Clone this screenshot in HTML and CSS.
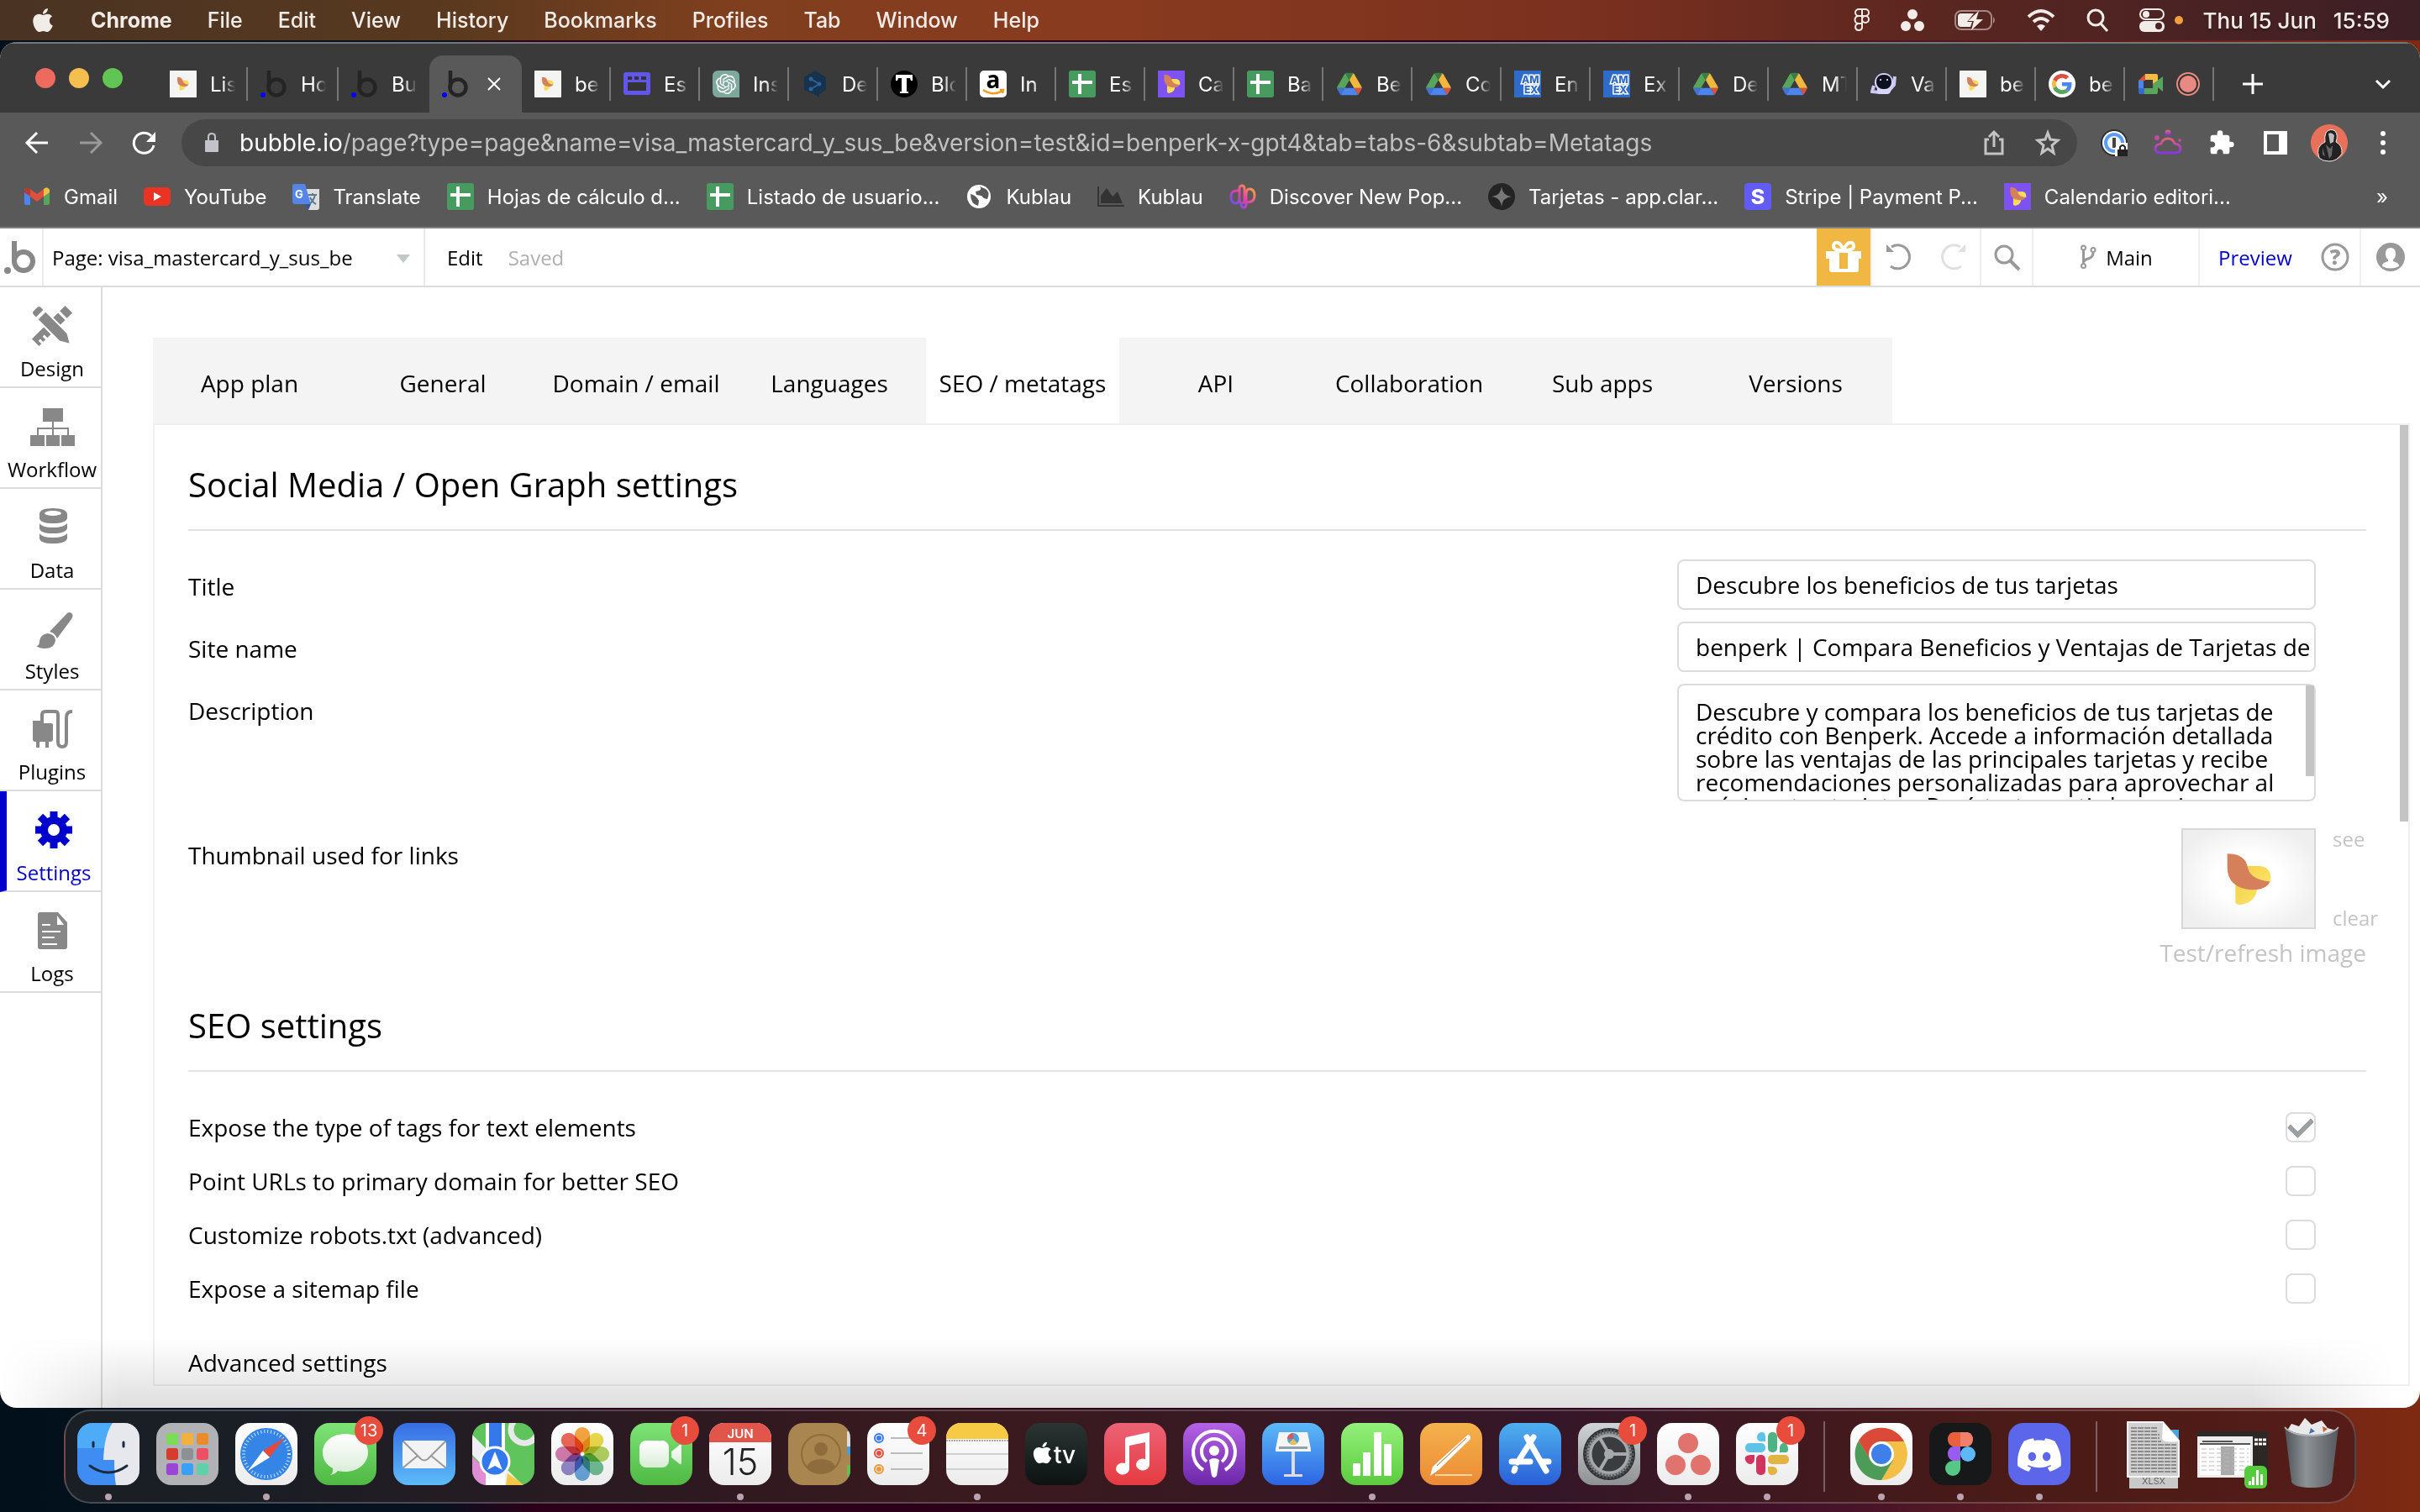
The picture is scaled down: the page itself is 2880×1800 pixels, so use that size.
FILE: index.html
```
<!DOCTYPE html>
<html lang="es">
<head>
    <meta charset="UTF-8">
    <meta name="viewport" content="width=device-width, initial-scale=1.0">
    <title>visa_mastercard_y_sus_be | Bubble Editor</title>
    <link rel="stylesheet" href="styles.css">
</head>
<body>
    <!-- Shared icons -->
    <svg class="sprite" aria-hidden="true">
        <defs>
            <linearGradient id="g-yellow" x1="0" y1="0" x2="1" y2="1"><stop offset="0" stop-color="#f3d34a"/><stop offset="1" stop-color="#fbe36a"/></linearGradient>
            <linearGradient id="g-paw" x1="0" y1="0" x2="0" y2="1"><stop offset="0" stop-color="#e0617a"/><stop offset="1" stop-color="#8a35e0"/></linearGradient>
            <linearGradient id="g-pop" x1="0" y1="1" x2="1" y2="0"><stop offset="0" stop-color="#3b5bff"/><stop offset=".5" stop-color="#e83ea8"/><stop offset="1" stop-color="#ffb52e"/></linearGradient>
            <linearGradient id="g-white" x1="0" y1="0" x2="0" y2="1"><stop offset="0" stop-color="#fff"/><stop offset="1" stop-color="#d8ecd6"/></linearGradient>
            <linearGradient id="g-steel" x1="0" y1="0" x2="1" y2="0"><stop offset="0" stop-color="#4e5357"/><stop offset=".4" stop-color="#8d9297"/><stop offset="1" stop-color="#55595d"/></linearGradient>
            <symbol id="i-apple" viewBox="0 0 384 512"><path fill="currentColor" d="M318.7 268.7c-.2-36.7 16.4-64.4 50-84.8-18.8-26.9-47.2-41.7-84.7-44.6-35.5-2.8-74.3 20.7-88.5 20.7-15 0-49.4-19.7-76.4-19.7C63.3 141.2 4 184.8 4 273.5q0 39.3 14.4 81.2c12.8 36.7 59 126.7 107.2 125.2 25.2-.6 43-17.9 75.8-17.9 31.8 0 48.3 17.9 76.4 17.9 48.6-.7 90.4-82.5 102.6-119.3-65.2-30.7-61.7-90-61.7-91.9zm-56.6-164.2c27.3-32.4 24.8-61.9 24-72.5-24.1 1.4-52 16.4-67.9 34.9-17.5 19.8-27.8 44.3-25.6 71.9 26.1 2 49.9-11.4 69.5-34.3z"/></symbol>
            <symbol id="i-bird" viewBox="50 28 62 66"><path fill="url(#g-yellow)" d="M78 44H94Q107 46 107 58V64H80z"/><path fill="url(#g-yellow)" d="M64 66H91Q91 88 72 91Q64 92 64 88z"/><path fill="#d5805a" d="M54 29Q76 29 79 46Q82 61 106 63Q102 73 84 73Q54 71 54 45Z"/></symbol>
            <symbol id="i-benperk" viewBox="0 0 32 32"><path fill="#f4f4f2" d="M0 0h32v32H0z"/><use href="#i-bird" x="8" y="7" width="16" height="18"/></symbol>
            <symbol id="i-benperk-purple" viewBox="0 0 32 32"><path fill="#7d52f0" d="M0 0h32v32H0z"/><use href="#i-bird" x="6" y="4" width="22" height="24"/></symbol>
            <symbol id="i-bubble" viewBox="0 0 32 32"><path fill="none" stroke="#242424" stroke-width="4.500" d="M10 0v20"/><circle cx="19" cy="20" r="9.500" fill="none" stroke="#242424" stroke-width="4.500"/><circle cx="3" cy="29" r="3" fill="#00f"/></symbol>
            <symbol id="i-calendar-app" viewBox="0 0 32 32"><rect y="2" width="32" height="27" rx="3" fill="#6057ea"/><path fill="#333" d="M5 7h5v4H5zM13 7h5v4h-5zM21 7h6v4h-6zM5 14h22v10H5z"/></symbol>
            <symbol id="i-gpt" viewBox="0 0 32 32"><path fill="#7fa89c" d="M7 0h18q7 0 7 7v25H7q-7 0-7-7V7q0-7 7-7z"/><svg x="4" y="4" width="24" height="24" viewBox="0 0 24 24"><path fill="#fff" d="M22.2819 9.8211a5.9847 5.9847 0 0 0-.5157-4.9108 6.0462 6.0462 0 0 0-6.5098-2.9A6.0651 6.0651 0 0 0 4.9807 4.1818a5.9847 5.9847 0 0 0-3.9977 2.9 6.0462 6.0462 0 0 0 .7427 7.0966 5.98 5.98 0 0 0 .511 4.9107 6.051 6.051 0 0 0 6.5146 2.9001A5.9847 5.9847 0 0 0 13.2599 24a6.0557 6.0557 0 0 0 5.7718-4.2058 5.9894 5.9894 0 0 0 3.9977-2.9001 6.0557 6.0557 0 0 0-.7475-7.0729zm-9.022 12.6081a4.4755 4.4755 0 0 1-2.8764-1.0408l.1419-.0804 4.7783-2.7582a.7948.7948 0 0 0 .3927-.6813v-6.7369l2.02 1.1686a.071.071 0 0 1 .038.052v5.5826a4.504 4.504 0 0 1-4.4945 4.4944zm-9.6607-4.1254a4.4708 4.4708 0 0 1-.5346-3.0137l.142.0852 4.783 2.7582a.7712.7712 0 0 0 .7806 0l5.8428-3.3685v2.3324a.0804.0804 0 0 1-.0332.0615L9.74 19.9502a4.4992 4.4992 0 0 1-6.1408-1.6464zM2.3408 7.8956a4.485 4.485 0 0 1 2.3655-1.9728V11.6a.7664.7664 0 0 0 .3879.6765l5.8144 3.3543-2.0201 1.1685a.0757.0757 0 0 1-.071 0l-4.8303-2.7865A4.504 4.504 0 0 1 2.3408 7.872zm16.5963 3.8558L13.1038 8.364 15.1192 7.2a.0757.0757 0 0 1 .071 0l4.8303 2.7913a4.4944 4.4944 0 0 1-.6765 8.1042v-5.6772a.79.79 0 0 0-.407-.667zm2.0107-3.0231l-.142-.0852-4.7735-2.7818a.7759.7759 0 0 0-.7854 0L9.409 9.2297V6.8974a.0662.0662 0 0 1 .0284-.0615l4.8303-2.7866a4.4992 4.4992 0 0 1 6.6802 4.66zM8.3065 12.863l-2.02-1.1638a.0804.0804 0 0 1-.038-.0567V6.0742a4.4992 4.4992 0 0 1 7.3757-3.4537l-.142.0805L8.704 5.459a.7948.7948 0 0 0-.3927.6813zm1.0976-2.3654l2.602-1.4998 2.6069 1.4998v2.9994l-2.5974 1.4997-2.6067-1.4997Z"/></svg></symbol>
            <symbol id="i-deepl" viewBox="0 0 32 32"><path fill="#16324f" d="M16 0l13 8v15l-8 5v4l-6-4L3 23V8z"/><path fill="none" stroke="#2f6191" stroke-width="2" d="M11 10l10 6-10 6"/><g fill="#2f6191"><circle cx="11" cy="10" r="2.500"/><circle cx="21" cy="16" r="2.500"/><circle cx="11" cy="22" r="2.500"/></g></symbol>
            <symbol id="i-letter-t" viewBox="0 0 32 32"><circle cx="16" cy="16" r="16"/><path fill="#fff" d="M6 5h20v7h-2l-1-3h-4v16h2v2H11v-2h2V9H9l-1 3H6z"/></symbol>
            <symbol id="i-amazon" viewBox="0 0 32 32"><rect width="32" height="32" rx="5" fill="#fff"/><text x="16" y="21" text-anchor="middle" font-family="Open Sans, sans-serif" font-weight="700" font-size="28">a</text><path fill="none" stroke="#f49b1f" stroke-width="2.500" d="M4 23q12 8 23 1M24 23h4l-1 4"/></symbol>
            <symbol id="i-sheets" viewBox="0 0 32 32"><rect width="32" height="32" rx="3" fill="#479b5f"/><path fill="#fff" d="M11 4h4v8h13v4H15v12h-4V16H4v-4h7z"/></symbol>
            <symbol id="i-drive" viewBox="-3 -5 94 88"><path fill="#4272db" d="m6.600 66.850 3.850 6.650c.8 1.400 1.950 2.500 3.300 3.300l13.750-23.800H0c0 1.550.4 3.100 1.200 4.500z"/><path fill="#57a55a" d="M43.650 25 29.900 1.200c-1.350.8-2.500 1.900-3.300 3.300l-25.400 44A9 9 0 0 0 0 53h27.500z"/><path fill="#dc5040" d="M73.550 76.800c1.350-.8 2.500-1.900 3.300-3.300l9.250-16c.8-1.400 1.200-2.950 1.200-4.500H59.800z"/><path fill="#3b7d45" d="M43.650 25 57.400 1.200C56 .4 54.500 0 52.900 0H34.400c-1.600 0-3.150.45-4.500 1.200z"/><path fill="#4b86f0" d="M59.800 53H27.500L13.750 76.800c1.350.8 2.900 1.200 4.500 1.200h50.800c1.600 0 3.150-.45 4.500-1.200z"/><path fill="#f2b83d" d="m73.400 26.500-12.700-22c-.8-1.400-1.950-2.500-3.300-3.300L43.650 25 59.800 53h27.450c0-1.550-.4-3.100-1.200-4.500z"/></symbol>
            <symbol id="i-amex" viewBox="0 0 32 32"><path fill="#2f6bc9" d="M0 0h32v32H0z"/><g font-family="Inter, sans-serif" font-weight="800" font-size="12" fill="#2f6bc9" stroke="#fff" stroke-width="3" paint-order="stroke"><text x="9" y="15">AM</text><text x="12" y="27">EX</text></g></symbol>
            <symbol id="i-robot" viewBox="0 0 32 32"><path fill="none" stroke="#cdc8f5" stroke-width="4" d="M4 18l-2 7 9 1M29 7l-1 10-6 7"/><path fill="#d8d5f8" d="M8 19h16v6q-1 3-4 3h-8q-4 0-4-3z"/><circle cx="16" cy="14" r="11" fill="#d8d5f8"/><rect x="7" y="5" width="18" height="17" rx="8" fill="#0c1020"/><g fill="#fff"><circle cx="12" cy="11" r="1"/><circle cx="20" cy="11" r="1"/></g></symbol>
            <symbol id="i-google" viewBox="-8 -8 64 64"><circle cx="24" cy="24" r="32" fill="#fff"/><path fill="#dc5040" d="M24 9.500c3.540 0 6.710 1.220 9.210 3.600l6.850-6.850C35.900 2.380 30.470 0 24 0 14.620 0 6.510 5.380 2.560 13.220l7.980 6.190C12.430 13.720 17.740 9.500 24 9.500z"/><path fill="#4a86f0" d="M46.980 24.550c0-1.570-.15-3.090-.38-4.550H24v9.020h12.940c-.58 2.960-2.260 5.480-4.780 7.180l7.730 6c4.510-4.180 7.090-10.360 7.090-17.650z"/><path fill="#f2bd42" d="M10.530 28.590c-.48-1.450-.76-2.990-.76-4.590s.27-3.140.76-4.590l-7.980-6.190C.92 16.460 0 20.120 0 24c0 3.880.92 7.540 2.560 10.780l7.970-6.190z"/><path fill="#58a55c" d="M24 48c6.480 0 11.930-2.130 15.890-5.810l-7.730-6c-2.150 1.450-4.920 2.300-8.160 2.300-6.260 0-11.570-4.220-13.470-9.910l-7.980 6.190C6.510 42.620 14.620 48 24 48z"/></symbol>
            <symbol id="i-meet" viewBox="0 0 32 32"><path fill="#dc5040" d="M1 12l8-8v8z"/><path fill="#4a86f0" d="M1 12h6v9H1z"/><path fill="#3968cf" d="M1 21h7v7H3q-2 0-2-2z"/><path fill="#f2bd42" d="M9 4h13q2 0 2 2v7l-6 3v-5H9z"/><path fill="#58a55c" d="M8 28v-7h10v-5l12-9v18l-6-5v6q0 2-2 2z"/></symbol>
            <symbol id="i-fork" viewBox="0 0 40 60"><g fill="none" stroke="#999" stroke-width="4"><circle cx="9" cy="8" r="5"/><circle cx="32" cy="13" r="5"/><circle cx="9" cy="51" r="5"/><path stroke-width="6" d="M9 14v31M32 19q0 12-12 15-9 2-11 8"/></g></symbol>
        </defs>
    </svg>

    <header class="menubar">
        <nav class="menubar-menus">
            <svg class="apple"><use href="#i-apple"/></svg>
            <button class="menu app-name">Chrome</button>
            <button class="menu">File</button>
            <button class="menu">Edit</button>
            <button class="menu">View</button>
            <button class="menu">History</button>
            <button class="menu">Bookmarks</button>
            <button class="menu">Profiles</button>
            <button class="menu">Tab</button>
            <button class="menu">Window</button>
            <button class="menu">Help</button>
        </nav>
        <div class="menubar-status">
            <svg width="20" height="28" viewBox="0 0 20 28"><g fill="none" stroke="currentColor" stroke-width="2"><path d="M10 1H6a4 4 0 0 0 0 8h4zM10 1h4a4 4 0 0 1 0 8h-4zM10 9H6a4 4 0 0 0 0 9h4zM10 18H6a4 4 0 1 0 4 5z"/><circle cx="14" cy="13" r="4"/></g></svg>
            <svg width="28" height="28" viewBox="0 0 28 28"><g fill="currentColor"><circle cx="14" cy="7" r="6"/><circle cx="6" cy="21" r="6"/><circle cx="22" cy="21" r="6"/></g></svg>
            <svg width="50" height="28" viewBox="0 0 50 28"><rect x="1" y="3" width="43" height="22" rx="7" fill="none" stroke="currentColor" stroke-width="2" opacity=".5"/><path fill="currentColor" opacity=".5" d="M46 10q4 4 0 8z"/><path fill="currentColor" d="M8 6h15l-8 10h6l-2 6H8q-4 0-4-4v-8q0-4 4-4z"/><path fill="currentColor" d="M29 3L16 15h7l-3 11 14-13h-8z"/></svg>
            <svg width="34" height="28" viewBox="0 0 34 28"><g fill="none" stroke="currentColor" stroke-width="4"><path d="M2 10q15-14 30 0M8 16q9-8 18 0"/></g><path fill="currentColor" d="M12 21q5-4 10 0l-5 6z"/></svg>
            <svg width="28" height="28" viewBox="0 0 28 28"><g fill="none" stroke="currentColor" stroke-width="3"><circle cx="12" cy="11" r="9"/><path d="M18 18l8 9"/></g></svg>
            <svg width="30" height="28" viewBox="0 0 30 28"><rect x="1" y="1" width="28" height="12" rx="6" fill="none" stroke="currentColor" stroke-width="2"/><circle cx="8" cy="7" r="4" fill="currentColor"/><rect y="15" width="30" height="13" rx="6" fill="currentColor"/><circle cx="23" cy="21" r="4" fill="#4c2320"/></svg>
            <span class="mic-dot"></span>
            <time class="clock"><span>Thu 15 Jun</span><span>15:59</span></time>
        </div>
    </header>

    <div class="window">
        <div class="tabstrip">
            <div class="lights"><i class="close"></i><i class="minimise"></i><i class="zoom"></i></div>
            <div class="tabs tabs-wide">
                <div class="tab"><svg><use href="#i-benperk"/></svg><span>Lis</span></div>
                <div class="tab"><svg><use href="#i-bubble"/></svg><span>Ho</span></div>
                <div class="tab"><svg><use href="#i-bubble"/></svg><span>Bu</span></div>
            </div>
            <div class="tab active">
                <svg><use href="#i-bubble"/></svg>
                <button class="tab-close" aria-label="Close tab"><svg viewBox="0 0 16 16"><path fill="none" stroke="#fff" stroke-width="2" d="M1 1l14 14M15 1L1 15"/></svg></button>
            </div>
            <div class="tabs">
                <div class="tab"><svg><use href="#i-benperk"/></svg><span>be</span></div>
                <div class="tab"><svg><use href="#i-calendar-app"/></svg><span>Es</span></div>
                <div class="tab"><svg><use href="#i-gpt"/></svg><span>Ins</span></div>
                <div class="tab"><svg><use href="#i-deepl"/></svg><span>De</span></div>
                <div class="tab"><svg><use href="#i-letter-t"/></svg><span>Blo</span></div>
                <div class="tab"><svg><use href="#i-amazon"/></svg><span>In</span></div>
                <div class="tab"><svg><use href="#i-sheets"/></svg><span>Es</span></div>
                <div class="tab"><svg><use href="#i-benperk-purple"/></svg><span>Ca</span></div>
                <div class="tab"><svg><use href="#i-sheets"/></svg><span>Ba</span></div>
                <div class="tab"><svg><use href="#i-drive"/></svg><span>Be</span></div>
                <div class="tab"><svg><use href="#i-drive"/></svg><span>Co</span></div>
                <div class="tab"><svg><use href="#i-amex"/></svg><span>En</span></div>
                <div class="tab"><svg><use href="#i-amex"/></svg><span>Ex</span></div>
                <div class="tab"><svg><use href="#i-drive"/></svg><span>De</span></div>
                <div class="tab"><svg><use href="#i-drive"/></svg><span>MT</span></div>
                <div class="tab"><svg><use href="#i-robot"/></svg><span>Va</span></div>
                <div class="tab"><svg><use href="#i-benperk"/></svg><span>be</span></div>
                <div class="tab"><svg><use href="#i-google"/></svg><span>be</span></div>
                <div class="tab"><svg><use href="#i-meet"/></svg><i class="recording"></i></div>
            </div>
            <button class="new-tab" aria-label="New tab"><svg viewBox="0 0 24 24"><path stroke="#fff" stroke-width="3" d="M12 0v24M0 12h24"/></svg></button>
            <button class="tab-search" aria-label="Search tabs"><svg viewBox="0 0 18 12"><path fill="none" stroke="#fff" stroke-width="3" d="M1 2l8 8 8-8"/></svg></button>
        </div>

        <div class="toolbar">
            <div class="nav-buttons">
                <button aria-label="Back"><svg viewBox="0 0 28 28"><path fill="none" stroke="#fff" stroke-width="3" d="M27 14H3M14 2L2 14l12 12"/></svg></button>
                <button aria-label="Forward"><svg viewBox="0 0 28 28"><path fill="none" stroke="#999" stroke-width="3" d="M1 14h24M14 2l12 12-12 12"/></svg></button>
                <button aria-label="Reload"><svg viewBox="0 0 28 28"><path fill="none" stroke="#fff" stroke-width="3" d="M25 17A12 12 0 1 1 22 6"/><path fill="#fff" d="M27 1v12H16z"/></svg></button>
            </div>
            <div class="omnibox">
                <svg class="lock" viewBox="0 0 18 24"><path fill="#c0c4c8" d="M1 9h16v13q0 1-1 1H2q-1 0-1-1z"/><path fill="none" stroke="#c0c4c8" stroke-width="2" d="M5 10V5q0-4 4-4t4 4v5"/></svg>
                <p class="url"><b>bubble.io</b>/page?type=page&amp;name=visa_mastercard_y_sus_be&amp;version=test&amp;id=benperk-x-gpt4&amp;tab=tabs-6&amp;subtab=Metatags</p>
                <button aria-label="Share"><svg viewBox="0 0 30 30"><path fill="none" stroke="#c4c4c4" stroke-width="3" d="M9 11H5v17h20V11h-4M15 20V3M9 8l6-6 6 6"/></svg></button>
                <button aria-label="Bookmark this page"><svg viewBox="0 0 30 30"><path fill="none" stroke="#c4c4c4" stroke-width="3" d="M15 3l3 8 9 1-7 6 2 9-7-5-7 5 2-9-7-6 9-1z"/></svg></button>
            </div>
            <div class="extensions">
                <button aria-label="1Password"><svg viewBox="0 0 32 32"><circle cx="16" cy="16" r="16" fill="#2d3034"/><circle cx="16" cy="16" r="14" fill="#fff"/><circle cx="16" cy="16" r="10" fill="#f4f4f4" stroke="#5b9df5" stroke-width="4"/><path fill="#444" d="M14 10h4v12h-4z"/><path fill="#fff" d="M17 32V22l6-6h9v16z"/><path fill="#222" d="M20 24h12v8H20z"/><path fill="none" stroke="#222" stroke-width="2" d="M23 24v-3q3-4 6 0v3"/></svg></button>
                <button aria-label="Paw"><svg viewBox="0 0 32 32"><g fill="none" stroke="url(#g-paw)" stroke-width="3"><path d="M8 28q-7 0-7-5 0-5 7-6 2-6 8-6t8 6q7 1 7 6 0 5-7 5z"/><circle cx="16" cy="4" r="2"/></g><circle cx="3" cy="10" r="3" fill="#bb4ca0"/><circle cx="30" cy="13" r="2" fill="#bb4ca0"/></svg></button>
                <button aria-label="Extensions"><svg viewBox="0 0 24 24"><path fill="#fff" d="M20.500 11H19V7c0-1.100-.9-2-2-2h-4V3.500a2.500 2.500 0 0 0-5 0V5H4c-1.100 0-2 .9-2 2v3.800h1.500c1.490 0 2.700 1.210 2.700 2.700s-1.210 2.700-2.700 2.700H2V20c0 1.100.9 2 2 2h3.800v-1.500c0-1.490 1.210-2.700 2.700-2.700s2.700 1.210 2.700 2.700V22H17c1.100 0 2-.9 2-2v-4h1.500a2.500 2.500 0 0 0 0-5z"/></svg></button>
                <button aria-label="Side panel"><svg viewBox="0 0 32 32"><path fill="#fff" fill-rule="evenodd" d="M2 2h28v28H2zM6 6v20h14V6z"/></svg></button>
                <button class="avatar" aria-label="Profile"><svg viewBox="0 0 44 44"><circle cx="22" cy="22" r="22" fill="#e9715a"/><path fill="#222" stroke="#eee" d="M10 40q-5-14 7-19-1-6 1-11 5-6 11-2 4 5 1 13 8 4 7 14-6 9-15 9-8 0-12-4z"/><path fill="#bbb" d="M21 11q4-2 7 2l-1 8-4 2z"/><path fill="#666" d="M18 24l5 5 3-4-1 12-3 4zM14 28l3 10-3-2z"/></svg></button>
                <button aria-label="Menu"><svg viewBox="0 0 32 32"><g fill="#fff"><circle cx="16" cy="5" r="3"/><circle cx="16" cy="16" r="3"/><circle cx="16" cy="27" r="3"/></g></svg></button>
            </div>
        </div>

        <nav class="bookmarks">
            <a href="#"><svg viewBox="0 0 32 32"><path fill="#4a86f0" d="M1 7l7 5v14H3q-2 0-2-2z"/><path fill="#58a55c" d="M31 7l-7 5v14h5q2 0 2-2z"/><path fill="#dc5040" d="M8 7l8 6 8-6v9l-8 6-8-6z"/><path fill="#b53a30" d="M1 8q3-5 7-1v9l-7-5z"/><path fill="#f2bd42" d="M31 8q-3-5-7-1v9l7-5z"/></svg>Gmail</a>
            <a href="#"><svg viewBox="0 0 32 32"><rect y="5" width="32" height="22" rx="5" fill="#eb3324"/><path fill="#fff" d="M12 11l9 5-9 5z"/></svg>YouTube</a>
            <a href="#"><svg viewBox="0 0 32 32"><path fill="#dedede" d="M14 7h18v22q0 3-3 3H19z"/><path fill="#5685e8" d="M2 1h13l7 24H3q-3 0-3-3V3q0-2 2-2z"/><path fill="#2f4fb0" d="M16 25h6l-3 7z"/><text x="3" y="18" font-family="Inter, sans-serif" font-weight="700" font-size="13" fill="#fff">G</text><path fill="none" stroke="#5c7a8c" stroke-width="2" d="M19 14h10M24 12v2M27 14q-2 8-7 11M21 17q3 6 7 8"/></svg>Translate</a>
            <a href="#"><svg><use href="#i-sheets"/></svg>Hojas de cálculo d...</a>
            <a href="#"><svg><use href="#i-sheets"/></svg>Listado de usuario...</a>
            <a href="#"><svg viewBox="0 0 32 32"><circle cx="16" cy="16" r="14" fill="#fff"/><path fill="#595959" d="M6 13q5 1 8 5l2 3-1 6q-9-2-9-14zM17 4q3 3-1 5l-4 1 1 4 6 1 3 3 4 1q4-8-2-12z"/></svg>Kublau</a>
            <a href="#"><svg viewBox="0 0 32 32"><path fill="none" stroke="#333" stroke-width="2" d="M1 4v23h31"/><path fill="#333" d="M4 24V15l7-9 7 10 6-6 6 14z"/></svg>Kublau</a>
            <a href="#"><svg viewBox="0 0 32 32"><g fill="none" stroke="url(#g-pop)" stroke-width="3"><path d="M11 9Q2 8 2 16t6 8q4 0 4-7V7q0-4 3-4t3 4v12q0 5-3 5t-3-5M20 23q10 0 10-8t-6-8q-4 0-4 7v11q0 4-3 4t-3-4"/></g></svg>Discover New Pop...</a>
            <a href="#"><svg viewBox="0 0 32 32"><circle cx="16" cy="16" r="16" fill="#242424"/><path fill="#777" d="M16 4q1 11 12 12-11 1-12 12Q15 17 4 16 15 15 16 4z"/></svg>Tarjetas - app.clar...</a>
            <a href="#"><svg viewBox="0 0 32 32"><rect width="32" height="32" rx="4" fill="#635bf6"/><text x="16" y="25" text-anchor="middle" font-family="Inter, sans-serif" font-weight="800" font-size="25" fill="#fff">S</text></svg>Stripe | Payment P...</a>
            <a href="#"><svg><use href="#i-benperk-purple"/></svg>Calendario editori...</a>
            <button class="more" aria-label="More bookmarks">»</button>
        </nav>

        <div class="editor-bar">
            <a class="logo" href="#" aria-label="Bubble"><svg viewBox="0 0 38 40"><path fill="none" stroke="#888" stroke-width="6" d="M12 1v24"/><circle cx="23" cy="25" r="11" fill="none" stroke="#888" stroke-width="6"/><circle cx="4" cy="36" r="4" fill="#888"/></svg></a>
            <div class="page-picker">
                <select aria-label="Page"><option>Page: visa_mastercard_y_sus_be</option></select>
            </div>
            <button class="edit">Edit</button>
            <span class="saved">Saved</span>
            <div class="editor-tools">
                <button class="gift" aria-label="Gift"><svg viewBox="0 0 42 38"><g fill="none" stroke="#fff" stroke-width="4"><path d="M20 11Q9 11 9 6t5-4q4 1 7 9 3-8 7-9 5-1 5 4t-11 5"/></g><path fill="#fff" d="M0 12h42v9h-3v13q0 3-3 3H7q-3 0-3-3V21H0z"/><path fill="#f1b743" d="M16 14h10v19H16z"/></svg></button>
                <div class="history">
                    <button aria-label="Undo"><svg viewBox="0 0 32 32"><path fill="none" stroke="#999" stroke-width="3" d="M6 27A14 14 0 1 0 7 4"/><path fill="#999" d="M1 1v9h9z"/></svg></button>
                    <button aria-label="Redo"><svg viewBox="0 0 32 32"><path fill="none" stroke="#e0e0e0" stroke-width="3" d="M26 27A14 14 0 1 1 25 4"/><path fill="#e0e0e0" d="M31 1v9h-9z"/></svg></button>
                </div>
                <button class="find" aria-label="Search"><svg viewBox="0 0 32 32"><circle cx="13" cy="13" r="10" fill="none" stroke="#999" stroke-width="3"/><path stroke="#999" stroke-width="4" d="M20 20l11 11"/></svg></button>
                <button class="branch"><svg><use href="#i-fork"/></svg>Main</button>
                <a class="preview" href="#">Preview</a>
                <button class="help" aria-label="Help"><svg viewBox="0 0 34 34"><circle cx="17" cy="17" r="15" fill="none" stroke="#999" stroke-width="3"/><text x="17" y="26" text-anchor="middle" font-family="Open Sans, sans-serif" font-weight="800" font-size="25" fill="#999">?</text></svg></button>
                <button class="account" aria-label="Account"><svg viewBox="0 0 34 34"><circle cx="17" cy="17" r="17" fill="#999"/><path fill="#fff" d="M17 6q6 0 6 7 0 5-3 7v2l5 2q2 1 2 4-10 5-20 0 0-3 2-4l5-2v-2q-3-2-3-7 0-7 6-7z"/></svg></button>
            </div>
        </div>

        <div class="editor">
            <nav class="sidebar">
                <a href="#"><svg viewBox="0 0 56 56"><g transform="translate(28 28)" fill="#888"><g transform="rotate(45)"><path d="M-6-28H6V-19H-6zM-6-16H6v9H-6zM-6 8H6V14H1v3h5v4H1v3h5v4H-6z"/></g><g transform="rotate(-45)"><path stroke="#fff" stroke-width="2" d="M-7-18H7V19L0 31-7 19z"/><path d="M-6-21V-25q0-3 3-3h6q3 0 3 3v4z"/></g></g></svg><span>Design</span></a>
                <a href="#"><svg viewBox="0 0 56 56"><g fill="#888"><path d="M17 6h24v16H17zM2 38h17v13H2zM21 38h16v13H21zM39 38h16v13H39z"/><path d="M28 22h2v16h-2zM10 29h38v2H10zM10 29h2v9h-2zM46 29h2v9h-2z"/></g></svg><span>Workflow</span></a>
                <a href="#"><svg viewBox="0 0 56 56"><path fill="#888" d="M13 12q0-7 16-7t17 7v5q-2 6-17 6T13 17zM13 23q3 5 16 5t17-5v6q-2 6-17 6t-16-6zM13 35q3 5 16 5t17-5v6q-2 6-17 6t-16-6z"/><ellipse cx="29" cy="11" rx="10" ry="3" fill="#fff"/></svg><span>Data</span></a>
                <a href="#"><svg viewBox="0 0 56 56"><path fill="#888" d="M51 10q3 2 0 7L34 40q-3-7-9-8L46 10q3-2 5 0z"/><path fill="#888" d="M23 34q8 1 9 8-1 10-13 10-6 0-10-3 4 0 4-6 1-8 10-9z"/></svg><span>Styles</span></a>
                <a href="#"><svg viewBox="0 0 56 56"><path fill="#888" d="M7 21h20q2 0 2 2v17q0 3-3 3h-2v7h-4v-7h-7v7H9v-7H8q-3 0-3-3V24q0-3 2-3z"/><path fill="none" stroke="#888" stroke-width="4" d="M5 20h11V11q0-4 4-4h12q3 0 3 4v32q0 6 5 6t5-6V14q0-7 7-7"/></svg><span>Plugins</span></a>
                <a href="#" class="current"><svg viewBox="0 0 56 56"><g transform="translate(28 28)"><circle r="16" fill="#00c"/><g stroke="#00c" stroke-width="9"><path d="M0-22V22M-22 0H22M-16-16L16 16M-16 16L16-16"/></g><circle r="7" fill="#fff"/></g></svg><span>Settings</span></a>
                <a href="#"><svg viewBox="0 0 56 56"><path fill="#888" d="M14 6h21l11 12v29q0 3-3 3H14q-3 0-3-3V9q0-3 3-3z"/><path fill="#fff" d="M34 10v11h8zM16 20h10v2H16zM16 28h22v2H16zM16 35h15v2H16zM16 43h18v2H16z"/></svg><span>Logs</span></a>
            </nav>

            <main class="content">
                <nav class="settings-tabs">
                    <a href="#">App plan</a>
                    <a href="#">General</a>
                    <a href="#">Domain / email</a>
                    <a href="#">Languages</a>
                    <a href="#" class="selected">SEO / metatags</a>
                    <a href="#">API</a>
                    <a href="#">Collaboration</a>
                    <a href="#">Sub apps</a>
                    <a href="#">Versions</a>
                </nav>

                <form class="panel">
                    <h2>Social Media / Open Graph settings</h2>
                    <div class="fields">
                        <div class="field">
                            <label for="title">Title</label>
                            <input type="text" id="title" value="Descubre los beneficios de tus tarjetas">
                        </div>
                        <div class="field">
                            <label for="site-name">Site name</label>
                            <input type="text" id="site-name" value="benperk | Compara Beneficios y Ventajas de Tarjetas de">
                        </div>
                        <div class="field">
                            <label for="description">Description</label>
                            <div class="textarea-wrap">
                                <textarea id="description">Descubre y compara los beneficios de tus tarjetas de crédito con Benperk. Accede a información detallada sobre las ventajas de las principales tarjetas y recibe recomendaciones personalizadas para aprovechar al máximo tus tarjetas. Regístrate gratis hoy mismo</textarea>
                                <span class="scroll-thumb"></span>
                            </div>
                        </div>
                    </div>
                    <div class="thumbnail">
                        <span>Thumbnail used for links</span>
                        <div class="thumbnail-side">
                            <div class="thumbnail-preview">
                                <div class="picture"><svg viewBox="0 0 160 120"><use href="#i-bird" x="50" y="28" width="62" height="66"/></svg></div>
                                <div class="picture-links"><a href="#">see</a><a href="#">clear</a></div>
                            </div>
                            <a class="refresh" href="#">Test/refresh image</a>
                        </div>
                    </div>

                    <h2>SEO settings</h2>
                    <div class="checks">
                        <div class="check"><label for="tags">Expose the type of tags for text elements</label><input type="checkbox" id="tags" checked></div>
                        <div class="check"><label for="urls">Point URLs to primary domain for better SEO</label><input type="checkbox" id="urls"></div>
                        <div class="check"><label for="robots">Customize robots.txt (advanced)</label><input type="checkbox" id="robots"></div>
                        <div class="check"><label for="sitemap">Expose a sitemap file</label><input type="checkbox" id="sitemap"></div>
                    </div>
                    <p class="advanced">Advanced settings</p>
                    <span class="scroll-thumb"></span>
                </form>
            </main>
        </div>
    </div>

    <footer class="dock-area">
        <div class="dock">
            <div class="app running"><svg viewBox="0 0 74 74"><path fill="#3f8df3" d="M0 0h74v74H0z"/><path fill="#55b8f8" d="M0 0h42v30H0z" opacity=".7"/><path fill="#e6e8ee" d="M42 0h32v74H46q-2-10-2-30H31Q32 14 42 0z"/><path fill="none" stroke="#1c2a3c" stroke-width="3" stroke-linecap="round" d="M19 23v5M55 23v5M15 51q22 16 44 0"/></svg></div>
            <div class="app launchpad"><svg viewBox="0 0 74 74"><g><rect x="12" y="12" width="14" height="14" rx="3" fill="#7bdc57"/><rect x="30" y="12" width="14" height="14" rx="3" fill="#f2b13c"/><rect x="48" y="12" width="14" height="14" rx="3" fill="#ea8c2d"/><rect x="12" y="30" width="14" height="14" rx="3" fill="#d93a2e"/><rect x="30" y="30" width="14" height="14" rx="3" fill="#8d9196"/><rect x="48" y="30" width="14" height="14" rx="3" fill="#ee4f64"/><rect x="12" y="48" width="14" height="14" rx="3" fill="#9a45d6"/><rect x="30" y="48" width="14" height="14" rx="3" fill="#3aa0f4"/><rect x="48" y="48" width="14" height="14" rx="3" fill="#60d0a8"/></g></svg></div>
            <div class="app running light"><svg viewBox="0 0 74 74"><circle cx="37" cy="37" r="31" fill="#3585e6"/><circle cx="37" cy="37" r="27" fill="none" stroke="#cfe6ff" stroke-width="4" stroke-dasharray="1 3"/><path fill="#e6483c" d="M59 17L41 41l-8-8z"/><path fill="#fff" d="M15 57l18-24 8 8z"/></svg></div>
            <div class="app green"><svg viewBox="0 0 74 74"><path fill="url(#g-white)" d="M37 13c15 0 27 9 27 22S52 58 37 58q-5 0-9-1-3 4-9 5 4-3 3-8C14 50 10 43 10 35c0-13 12-22 27-22z"/></svg><span class="badge">13</span></div>
            <div class="app mail"><svg viewBox="0 0 74 74"><rect x="11" y="21" width="52" height="33" rx="4" fill="#f3f3f3"/><path fill="none" stroke="#999" stroke-width="2" d="M12 22l21 21q4 3 8 0l21-21M12 53l17-14M62 53L45 39"/></svg></div>
            <div class="app"><svg viewBox="0 0 74 74"><path fill="#5fc45b" d="M0 0h74v74H0z"/><path fill="#eef0f4" d="M0 14l60 60H36L0 38z"/><path fill="#e18dd6" d="M0 40l24 24v10H0z"/><path fill="#f4c844" d="M42 60l20 14H40z"/><path fill="#fff" d="M16 0h23v74H16z"/><path fill="#3478ea" d="M20 0h15v40H20z"/><circle cx="62" cy="8" r="16" fill="none" stroke="#e8e8ea" stroke-width="7"/><circle cx="27" cy="46" r="17" fill="#3478f0" stroke="#fff" stroke-width="3"/><path fill="#fff" d="M27 34l9 22-9-5-9 5z"/></svg></div>
            <div class="app light"><svg viewBox="0 0 74 74"><g class="petals" transform="translate(37 37)"><rect x="-9" y="-32" width="18" height="30" rx="9" fill="#f59a2c"/><rect x="-9" y="-32" width="18" height="30" rx="9" fill="#e8d437" transform="rotate(45)"/><rect x="-9" y="-32" width="18" height="30" rx="9" fill="#a9cf4d" transform="rotate(90)"/><rect x="-9" y="-32" width="18" height="30" rx="9" fill="#63b98a" transform="rotate(135)"/><rect x="-9" y="-32" width="18" height="30" rx="9" fill="#5b9fdc" transform="rotate(180)"/><rect x="-9" y="-32" width="18" height="30" rx="9" fill="#8b7cc8" transform="rotate(225)"/><rect x="-9" y="-32" width="18" height="30" rx="9" fill="#cf6fa6" transform="rotate(270)"/><rect x="-9" y="-32" width="18" height="30" rx="9" fill="#ea5548" transform="rotate(315)"/></g></svg></div>
            <div class="app green"><svg viewBox="0 0 74 74"><rect x="11" y="21" width="35" height="32" rx="8" fill="url(#g-white)"/><path fill="url(#g-white)" d="M49 34l10-8q2-1 2 2v19q0 3-2 2l-10-8z"/></svg><span class="badge">1</span></div>
            <div class="app running light"><svg viewBox="0 0 74 74"><path fill="#e2554a" d="M0 0h74v23H0z"/><g font-family="Inter, sans-serif" text-anchor="middle"><text x="37" y="18" font-size="15" font-weight="600" fill="#fff">JUN</text><text x="37" y="62" font-size="43" font-weight="300" fill="#222">15</text></g></svg></div>
            <div class="app contacts"><svg viewBox="0 0 74 74"><g fill="#8e6c3c"><path fill="#dcdcdc" d="M70 10h4v18h-4z"/><path fill="#4a9bd8" d="M70 28h4v10h-4z"/><path fill="#62c04e" d="M70 50h4v14h-4z"/><circle cx="39" cy="37" r="23" fill="none" stroke="#8e6c3c" stroke-width="2"/><circle cx="39" cy="31" r="8"/><path d="M22 52q4-9 17-9t17 9q-7 8-17 8t-17-8z"/></g></svg></div>
            <div class="app light"><svg viewBox="0 0 74 74"><g fill="none" stroke-width="2"><path stroke="#bbb" d="M28 18h38M28 36h38M28 55h38"/><circle cx="14" cy="18" r="5" stroke="#3a7cf0"/><circle cx="14" cy="36" r="5" stroke="#e4503f"/><circle cx="14" cy="55" r="5" stroke="#eb9a37"/></g><circle cx="14" cy="18" r="3" fill="#3a7cf0"/><circle cx="14" cy="36" r="3" fill="#e4503f"/><circle cx="14" cy="55" r="3" fill="#eb9a37"/></svg><span class="badge">4</span></div>
            <div class="app running light"><svg viewBox="0 0 74 74"><path fill="#f6ca45" d="M0 0h74v19H0z"/><path stroke="#aaa" stroke-width="2" stroke-dasharray="2 1" d="M0 21h74"/><path stroke="#cfcfcf" stroke-width="2" d="M0 37h74M0 55h74"/></svg></div>
            <div class="app tv"><svg viewBox="0 0 74 74"><svg x="9" y="21" width="23" height="29" color="#fff"><use href="#i-apple"/></svg><text x="34" y="48" font-family="Inter, sans-serif" font-size="28" font-weight="500" fill="#fff">tv</text></svg></div>
            <div class="app music"><svg viewBox="0 0 74 74"><path fill="#fff" d="M26 17l28-6v38a8 7 0 1 1-5-6V23l-19 4v27a8 7 0 1 1-5-6V19z"/></svg></div>
            <div class="app podcasts"><svg viewBox="0 0 74 74"><g fill="none" stroke="#fff" stroke-width="4"><path d="M24 56a25 25 0 1 1 26 0M28 46a15 15 0 1 1 18 0"/></g><circle cx="37" cy="33" r="6" fill="#fff"/><path fill="#fff" d="M31 44q6-4 12 0l-3 19q-3 4-6 0z"/></svg></div>
            <div class="app keynote"><svg viewBox="0 0 74 74"><path fill="#f5f5f5" d="M20 11h34l4 20v3H16v-3z"/><path fill="#8ba3ad" d="M20 28h34v3H20z"/><circle cx="37" cy="19" r="7" fill="#4aa3e0"/><path fill="#e25555" d="M37 19v-7a7 7 0 0 0-7 7z"/><path fill="#f1c04b" d="M37 19l-5 5a7 7 0 0 0 10 0z"/><path fill="#ddd" d="M35 34h4v28h-4zM26 61h22v3H26z"/></svg></div>
            <div class="app running numbers"><svg viewBox="0 0 74 74"><g fill="#fff"><rect x="14" y="48" width="9" height="15" rx="1"/><rect x="26" y="35" width="9" height="28" rx="1"/><rect x="39" y="11" width="9" height="52" rx="1"/><rect x="51" y="25" width="9" height="38" rx="1"/></g></svg></div>
            <div class="app pages"><svg viewBox="0 0 74 74"><path fill="#fff" d="M57 14q4 1 3 5L22 56l-10 7 3-11z"/><path stroke="#a26a2c" stroke-width="1" d="M20 51L55 18"/><path stroke="#ffd9a3" stroke-width="2" d="M18 62h44"/></svg></div>
            <div class="app appstore"><svg viewBox="0 0 74 74"><g stroke="#fff" stroke-width="7" stroke-linecap="round"><path d="M41 17L22 47M33 17l23 40M15 46h22M50 46h9M19 54l-1 3"/></g></svg></div>
            <div class="app settings"><svg viewBox="0 0 74 74"><circle cx="37" cy="37" r="31" fill="#2e3033"/><circle cx="37" cy="37" r="27" fill="#8d9193" stroke="#55585a" stroke-width="5" stroke-dasharray="2 2"/><circle cx="37" cy="37" r="22" fill="#3a3c3f" stroke="#a5a9ab" stroke-width="3"/><path stroke="#a5a9ab" stroke-width="4" d="M37 37h22M37 37L26 18M37 37L26 56"/><circle cx="37" cy="37" r="6" fill="#a5a9ab"/></svg><span class="badge">1</span></div>
            <div class="app running light"><svg viewBox="0 0 74 74"><g fill="#e0736e"><circle cx="37" cy="24" r="12"/><circle cx="22" cy="50" r="12"/><circle cx="52" cy="50" r="12"/></g></svg></div>
            <div class="app running light"><svg viewBox="0 0 74 74"><g fill="#5fc3e8"><rect x="11" y="24" width="24" height="11" rx="5"/><path d="M35 22h-5q-5 0-5-5t5-6 5 6z"/></g><g fill="#4db284"><rect x="38" y="11" width="11" height="24" rx="5"/><path d="M52 35v-6q1-5 5-5t5 6-5 5z"/></g><g fill="#e2b443"><rect x="38" y="38" width="25" height="11" rx="5"/><path d="M38 52h6q5 1 5 5t-5 5-6-5z"/></g><g fill="#d1355f"><rect x="24" y="38" width="11" height="24" rx="5"/><path d="M22 38v6q-1 5-5 5t-6-5 6-6z"/></g></svg><span class="badge">1</span></div>
            <i class="divider"></i>
            <div class="app running light"><svg viewBox="0 0 74 74"><circle cx="37" cy="37" r="31" fill="#f4bf46"/><path fill="#d94a38" d="M10 21A31 31 0 0 1 64 22H37z"/><path fill="#4c9b58" d="M10 21A31 31 0 0 0 37 68l14-24H24z"/><path fill="#d94a38" d="M10 21h54H37L24 44z"/><circle cx="37" cy="37" r="15" fill="#fff"/><circle cx="37" cy="37" r="12" fill="#3f7fe8"/></svg></div>
            <div class="app running figma"><svg viewBox="0 0 74 74"><path fill="#e8603c" d="M37 11h-9a9 9 0 0 0 0 17h9z"/><path fill="#f07f6b" d="M37 11h9a9 9 0 0 1 0 17h-9z"/><path fill="#9a5cf0" d="M37 28h-9a9 9 0 0 0 0 17h9z"/><circle cx="46" cy="37" r="9" fill="#5cb8f7"/><path fill="#57c785" d="M37 45h-9a9 9 0 1 0 9 9z"/></svg></div>
            <div class="app running discord"><svg viewBox="0 0 74 74"><svg x="10" y="12" width="54" height="52" viewBox="0 0 24 24"><path fill="#fff" d="M20.317 4.3698a19.7913 19.7913 0 00-4.8851-1.5152.0741.0741 0 00-.0785.0371c-.211.3753-.4447.8648-.6083 1.2495-1.8447-.2762-3.68-.2762-5.4868 0-.1636-.3933-.4058-.8742-.6177-1.2495a.077.077 0 00-.0785-.037 19.7363 19.7363 0 00-4.8852 1.515.0699.0699 0 00-.0321.0277C.5334 9.0458-.319 13.5799.0992 18.0578a.0824.0824 0 00.0312.0561c2.0528 1.5076 4.0413 2.4228 5.9929 3.0294a.0777.0777 0 00.0842-.0276c.4616-.6304.8731-1.2952 1.226-1.9942a.076.076 0 00-.0416-.1057c-.6528-.2476-1.2743-.5495-1.8722-.8923a.077.077 0 01-.0076-.1277c.1258-.0943.2517-.1923.3718-.2914a.0743.0743 0 01.0776-.0105c3.9278 1.7933 8.18 1.7933 12.0614 0a.0739.0739 0 01.0785.0095c.1202.099.246.1981.3728.2924a.077.077 0 01-.0066.1276 12.2986 12.2986 0 01-1.873.8914.0766.0766 0 00-.0407.1067c.3604.698.7719 1.3628 1.225 1.9932a.076.076 0 00.0842.0286c1.961-.6067 3.9495-1.5219 6.0023-3.0294a.077.077 0 00.0313-.0552c.5004-5.177-.8382-9.6739-3.5485-13.6604a.061.061 0 00-.0312-.0286zM8.02 15.3312c-1.1825 0-2.1569-1.0857-2.1569-2.419 0-1.3332.9555-2.4189 2.157-2.4189 1.2108 0 2.1757 1.0952 2.1568 2.419 0 1.3332-.9555 2.4189-2.1569 2.4189zm7.9748 0c-1.1825 0-2.1569-1.0857-2.1569-2.419 0-1.3332.9554-2.4189 2.1569-2.4189 1.2108 0 2.1757 1.0952 2.1568 2.419 0 1.3332-.946 2.4189-2.1568 2.4189Z"/></svg></svg></div>
            <i class="divider"></i>
            <div class="item"><svg viewBox="0 0 74 74"><path fill="#c9c9c9" d="M8 10h58v68H8z"/><path fill="#4aa3e0" d="M58 8h9v20h-9z"/><path fill="#d0d0d0" stroke="#f4f4f4" stroke-width="2" d="M6-1h42l19 22v43H6z"/><g stroke="#8b8b8b" stroke-width="2" stroke-dasharray="7 1"><path d="M10 6h32M10 10h32M10 14h34M10 18h34M10 22h36M10 26h54M10 30h54M10 34h54M10 38h54M10 42h54M10 46h54M10 50h54M10 54h54M10 58h54"/></g><path fill="#fff" d="M48-1l19 23q-18 2-20-3z"/><text x="37" y="73" text-anchor="middle" font-family="Inter, sans-serif" font-size="11" fill="#666">XLSX</text></svg></div>
            <div class="item wide"><svg viewBox="0 0 84 74"><path fill="#ececec" d="M0 10h84v55H0z"/><path fill="#2b2826" d="M0 10h84v6H0zM66 16h18v49H66z"/><path fill="#fff" d="M3 26h60v36H3z"/><path fill="#555" d="M3 24h60v2H3zM6 21h36v2H6z"/><path fill="#aaa" d="M28 28h16v34H28z"/><path stroke="#bbb" stroke-width="1" stroke-dasharray="6 3" d="M5 31h56M5 36h56M5 41h56M5 46h56M5 51h56M5 56h56"/><path stroke="#fff" stroke-width="3" stroke-dasharray="4 1" d="M68 20h14M68 25h14"/><rect x="56" y="51" width="27" height="27" rx="6" fill="#55cc3b"/><path fill="#fff" d="M61 69h3v5h-3zM65 64h3v10h-3zM70 56h3v18h-3zM75 61h3v13h-3z"/></svg></div>
            <div class="item"><svg viewBox="0 0 74 74"><path fill="#e9e9e9" d="M8 9l5-8 9 3 7-10 8 8 12-5 7 9 10 3-3 8H10z"/><path fill="#c65b3a" d="M50 4l6 3-5 4z"/><path fill="#4a6fb0" d="M36 6l5 4-7 3z"/><path fill="url(#g-steel)" d="M5 4q8 10 32 10T69 4l-8 66q-3 7-24 7t-24-7z"/><path fill="none" stroke="#aeb3b7" stroke-width="2" d="M5 5q8 10 32 10T69 5"/></svg></div>
        </div>
    </footer>
</body>
</html>
```
FILE: styles.css
```
:root {
    --strip: #3a3a3a;
    --toolbar: #595959;
    --omnibox: #474747;
    --line: #dcdcdc;
    --line-soft: #f0f0f0;
    --grey: #888;
    --muted: #c4c4c4;
    --blue: #0000cc;
    --ui-font: Inter, "Liberation Sans", sans-serif;
    --page-font: "Open Sans", "Noto Sans", sans-serif;
}

* {
    box-sizing: border-box;
}

body {
    margin: 0;
    height: 100vh;
    display: flex;
    flex-direction: column;
    overflow: hidden;
    font-family: var(--page-font);
    background: linear-gradient(to right, #02101c 0, #06121f 18%, #2c0018 22%, #2a0019 60%, #45122a 75%, #7e2a12 100%);
}

button {
    padding: 0;
    border: 0;
    background: none;
    color: inherit;
    font: inherit;
}

a {
    color: inherit;
    text-decoration: none;
}

svg {
    display: block;
    flex-shrink: 0;
    overflow: visible;
}

.sprite {
    position: absolute;
    width: 0;
    height: 0;
}

/* macOS menu bar */
.menubar {
    display: flex;
    justify-content: space-between;
    align-items: center;
    height: 48px;
    padding: 0 36px;
    color: #f2ece8;
    font-family: var(--ui-font);
    font-size: 25px;
    font-weight: 500;
    background: linear-gradient(to right, #4a3323, #58391f 18%, #7f3f1e 30%, #8a3b1f 45%, #7a301f 66%, #5a2620 80%, #3c1f26);
    text-shadow: 0 2px 3px rgba(0, 0, 0, 0.3);
}

.menubar-menus,
.menubar-status {
    display: flex;
    align-items: center;
}

.menubar-menus {
    gap: 42px;
}

.menubar-status {
    gap: 36px;
}

.apple {
    width: 30px;
    height: 32px;
}

.app-name {
    font-weight: 700;
}

.mic-dot {
    width: 10px;
    height: 10px;
    margin: 0 -12px 0 -24px;
    border-radius: 50%;
    background: #f2a03d;
}

.clock {
    display: flex;
    gap: 20px;
    font-size: 26px;
}

/* Browser window */
.window {
    position: relative;
    flex: 1;
    min-height: 0;
    display: flex;
    flex-direction: column;
    margin-top: 2px;
    border-radius: 20px;
    overflow: hidden;
    background: #fff;
}

.window::after {
    content: "";
    position: absolute;
    left: 0;
    right: 0;
    bottom: 0;
    height: 84px;
    pointer-events: none;
    background: linear-gradient(to top, rgba(0, 0, 0, 0.13), transparent);
    mask-image: linear-gradient(to right, transparent, #000 5%, #000 93%, transparent 99%);
}

.tabstrip {
    display: flex;
    align-items: flex-end;
    height: 84px;
    border-top: 2px solid #777;
    background: var(--strip);
    color: #fff;
    font-family: var(--ui-font);
    font-size: 24px;
}

.lights {
    display: flex;
    gap: 16px;
    width: 187px;
    padding: 0 0 29px 42px;
}

.lights i {
    width: 24px;
    height: 24px;
    border-radius: 50%;
}

.close { background: #ec6a5e; }
.minimise { background: #f4bf4f; }
.zoom { background: #61c554; }

.tabs {
    display: flex;
}

.tab {
    position: relative;
    display: flex;
    align-items: center;
    gap: 16px;
    width: 106px;
    height: 68px;
    padding-left: 15px;
}

.tabs-wide .tab {
    width: 108px;
}

.tab > svg {
    width: 32px;
    height: 32px;
}

.tab span {
    width: 30px;
    overflow: hidden;
    white-space: nowrap;
    mask-image: linear-gradient(to right, #000 50%, transparent);
}

.tabs .tab::after {
    content: "";
    position: absolute;
    right: 0;
    top: 14px;
    width: 2px;
    height: 40px;
    background: #777;
}

.tabs-wide .tab:last-child::after {
    display: none;
}

.tab.active {
    width: 110px;
    border-radius: 16px 16px 0 0;
    background: var(--toolbar);
}

.tab-close svg {
    width: 16px;
    height: 16px;
    margin-left: 6px;
}

.recording {
    width: 24px;
    height: 24px;
    border: 2px solid #333;
    border-radius: 50%;
    background: #e88a82;
    outline: 2px solid #e88a82;
}

.new-tab {
    margin-left: 34px;
    padding-bottom: 22px;
}

.new-tab svg {
    width: 24px;
    height: 24px;
}

.tab-search {
    margin: 0 35px 28px auto;
}

.tab-search svg {
    width: 18px;
    height: 12px;
}

.toolbar {
    display: flex;
    align-items: center;
    height: 72px;
    background: var(--toolbar);
}

.nav-buttons {
    display: flex;
    gap: 36px;
    padding: 0 30px;
}

.nav-buttons svg {
    width: 28px;
    height: 28px;
}

.omnibox {
    flex: 1;
    min-width: 0;
    display: flex;
    align-items: center;
    gap: 34px;
    height: 56px;
    padding: 0 20px 0 27px;
    border-radius: 28px;
    background: var(--omnibox);
    font-family: var(--ui-font);
    font-size: 28px;
    color: #c0c0c0;
}

.omnibox svg {
    width: 30px;
    height: 30px;
}

.omnibox .lock {
    width: 18px;
    height: 24px;
    margin-right: -10px;
}

.url {
    flex: 1;
    min-width: 0;
    margin: 0;
    overflow: hidden;
    white-space: nowrap;
}

.url b {
    font-weight: 400;
    color: #fff;
}

.extensions {
    display: flex;
    align-items: center;
    gap: 32px;
    padding: 0 28px;
}

.extensions svg {
    width: 32px;
    height: 32px;
}

.extensions .avatar {
    margin: 0 -6px;
}

.extensions .avatar svg {
    width: 44px;
    height: 44px;
}

.bookmarks {
    display: flex;
    align-items: center;
    gap: 31px;
    height: 66px;
    padding: 0 38px 8px 28px;
    border-bottom: 2px solid #808080;
    background: var(--toolbar);
    color: #fff;
    font-family: var(--ui-font);
    font-size: 24px;
}

.bookmarks a {
    display: flex;
    align-items: center;
    gap: 16px;
    white-space: nowrap;
}

.bookmarks svg {
    width: 32px;
    height: 32px;
}

.more {
    margin-left: auto;
}

/* Editor top bar */
.editor-bar {
    display: flex;
    height: 70px;
    flex-shrink: 0;
    border-bottom: 2px solid var(--line);
    font-size: 24px;
}

.logo {
    display: flex;
    align-items: center;
    width: 52px;
    padding-left: 5px;
    border-right: 2px solid #e8ecef;
}

.logo svg {
    width: 38px;
    height: 40px;
}

.page-picker {
    position: relative;
    width: 454px;
    border-right: 2px solid #e8ecef;
}

.page-picker::after {
    content: "";
    position: absolute;
    right: 16px;
    top: 31px;
    border: 8px solid transparent;
    border-top: 10px solid #c0c8cc;
    border-bottom: 0;
}

.page-picker select {
    width: 100%;
    height: 100%;
    padding: 0 0 0 10px;
    border: 0;
    appearance: none;
    background: none;
    color: #000;
    font: inherit;
}

.edit {
    padding: 0 30px 0 26px;
}

.saved {
    align-self: center;
    color: #b0b0b0;
}

.editor-tools {
    display: flex;
    margin-left: auto;
}

.editor-tools > * {
    display: flex;
    align-items: center;
    justify-content: center;
    border-right: 2px solid #eef0f3;
}

.editor-tools svg {
    width: 32px;
    height: 32px;
}

.editor-tools .gift {
    width: 66px;
    background: #f1b743;
    background-clip: padding-box;
}

.editor-tools .gift svg {
    width: 42px;
    height: 38px;
}

.history {
    gap: 32px;
    width: 130px;
}

.find {
    width: 62px;
}

.branch {
    gap: 10px;
    width: 198px;
}

.editor-tools .branch svg {
    width: 22px;
    height: 30px;
}

.editor-tools .preview {
    width: 132px;
    border-right: 0;
    color: var(--blue);
}

.help {
    width: 60px;
}

.editor-tools .account {
    width: 70px;
    border-right: 0;
}

.editor-tools .help svg,
.editor-tools .account svg {
    width: 34px;
    height: 34px;
}

/* Editor body */
.editor {
    flex: 1;
    min-height: 0;
    display: flex;
}

.sidebar {
    width: 122px;
    flex-shrink: 0;
    border-right: 2px solid var(--line);
    font-size: 24px;
}

.sidebar a {
    display: flex;
    flex-direction: column;
    align-items: center;
    gap: 6px;
    height: 120px;
    padding: 18px 0 0 4px;
    border-bottom: 2px solid var(--line);
}

.sidebar svg {
    width: 56px;
    height: 56px;
}

.sidebar span {
    line-height: 34px;
}

.sidebar .current {
    padding-left: 0;
    border-left: 8px solid var(--blue);
    color: var(--blue);
}

.content {
    flex: 1;
    min-width: 0;
    display: flex;
    flex-direction: column;
    padding: 60px 12px 26px 60px;
    font-size: 28px;
}

.settings-tabs {
    display: flex;
    height: 102px;
    flex-shrink: 0;
}

.settings-tabs a {
    display: flex;
    align-items: center;
    justify-content: center;
    width: 230px;
    padding-top: 6px;
    background: #f4f4f4;
    white-space: nowrap;
}

.settings-tabs .selected {
    background: #fff;
}

.panel {
    position: relative;
    flex: 1;
    min-height: 0;
    overflow: hidden;
    padding: 4px 50px 0 40px;
    border: 2px solid var(--line-soft);
}

.panel h2 {
    margin: 0;
    padding: 40px 0 26px;
    border-bottom: 2px solid #e2e2e2;
    font-size: 40px;
    font-weight: 400;
    line-height: 54px;
}

.fields {
    display: flex;
    flex-direction: column;
    gap: 10px;
    padding: 34px 60px 32px 0;
}

.field,
.thumbnail {
    display: flex;
    justify-content: space-between;
    align-items: flex-start;
    line-height: 64px;
}

.field input,
.textarea-wrap {
    width: 760px;
}

.field input,
textarea {
    display: block;
    border: 2px solid var(--line);
    border-radius: 8px;
    background: #fff;
    color: #000;
    font: inherit;
}

.field input {
    height: 60px;
    padding: 0 4px 0 20px;
}

.textarea-wrap {
    position: relative;
    height: 140px;
}

textarea {
    width: 100%;
    height: 100%;
    padding: 17px 30px 0 20px;
    overflow: hidden;
    resize: none;
}

.textarea-wrap textarea {
    line-height: 28px;
}

.scroll-thumb {
    position: absolute;
    top: 0;
    right: 0;
    width: 10px;
    height: 472px;
    background: var(--muted);
}

.textarea-wrap .scroll-thumb {
    top: 2px;
    right: 2px;
    height: 108px;
}

.thumbnail-side {
    color: var(--muted);
    text-align: right;
}

.thumbnail-preview {
    display: flex;
    justify-content: flex-end;
    gap: 20px;
}

.picture {
    width: 160px;
    height: 120px;
    border: 2px solid #d8d8d8;
    background: radial-gradient(#fff 35%, #efefef 80%);
}

.picture-links {
    display: flex;
    flex-direction: column;
    justify-content: space-between;
    width: 40px;
    font-size: 24px;
    line-height: 26px;
    text-align: left;
}

.refresh {
    display: block;
    margin-top: 8px;
    line-height: 40px;
}

.checks {
    padding: 34px 60px 24px 0;
}

.check {
    display: flex;
    justify-content: space-between;
    align-items: center;
    height: 64px;
}

.check input {
    display: grid;
    place-items: center;
    width: 36px;
    height: 36px;
    margin: 0;
    border: 2px solid var(--line);
    border-radius: 8px;
    appearance: none;
    background: #fff;
}

.check input:checked::after {
    content: "";
    width: 22px;
    height: 12px;
    margin-bottom: 6px;
    border: solid #9ba1a3;
    border-width: 0 0 6px 6px;
    border-radius: 2px;
    transform: rotate(-45deg);
}

.advanced {
    margin: 0;
    line-height: 64px;
}

/* Dock */
.dock-area {
    display: flex;
    justify-content: center;
    height: 124px;
    flex-shrink: 0;
    padding: 2px 0 10px;
}

.dock {
    display: flex;
    gap: 20px;
    padding: 14px;
    border: 2px solid rgba(255, 255, 255, 0.2);
    border-radius: 32px;
    background: linear-gradient(to right, #1a1e25 8%, #2f1920 28%, #3a1a1e 40%, #351628 65%, #4a1b17 85%, #551c18);
}

.app,
.item {
    position: relative;
    width: 74px;
    height: 74px;
    flex-shrink: 0;
}

.item.wide {
    width: 84px;
    margin: 0 -5px;
}

.app > svg {
    width: 74px;
    height: 74px;
    border-radius: 18px;
    overflow: hidden;
}

.item > svg {
    width: 100%;
    height: 100%;
}

.app.running::after {
    content: "";
    position: absolute;
    left: 33px;
    bottom: -18px;
    width: 8px;
    height: 8px;
    border-radius: 50%;
    background: #b9a3b0;
}

.petals rect {
    mix-blend-mode: multiply;
    opacity: 0.9;
}

.badge {
    position: absolute;
    top: -8px;
    right: -8px;
    width: 34px;
    height: 34px;
    border-radius: 50%;
    background: #e74c3c;
    color: #fff;
    font-family: var(--ui-font);
    font-size: 20px;
    line-height: 34px;
    text-align: center;
}

.divider {
    width: 2px;
    height: 84px;
    margin: -2px 10px 0;
    background: rgba(255, 255, 255, 0.3);
}

.light > svg { background: linear-gradient(#fff, #ececec); }
.launchpad > svg { background: #b1b2b6; }
.green > svg { background: linear-gradient(#7de376, #4fb944); }
.mail > svg { background: linear-gradient(#376de4, #5cbcf7); }
.contacts > svg { background: #a98550; }
.tv > svg { background: linear-gradient(#2b3533, #0d1213); }
.music > svg { background: linear-gradient(#ec6275, #e63b42); }
.podcasts > svg { background: linear-gradient(#b562e6, #6c27a8); }
.keynote > svg { background: linear-gradient(#5cbaf7, #2e64e4); }
.numbers > svg { background: linear-gradient(#93f07a, #5bcb3e); }
.pages > svg { background: linear-gradient(#f4b24c, #ec8a35); }
.appstore > svg { background: linear-gradient(#4fb0ee, #2a5fd8); }
.settings > svg { background: linear-gradient(#d0d4d6, #8e9092); }
.figma > svg { background: #17181a; }
.discord > svg { background: #5b66ea; }
```
